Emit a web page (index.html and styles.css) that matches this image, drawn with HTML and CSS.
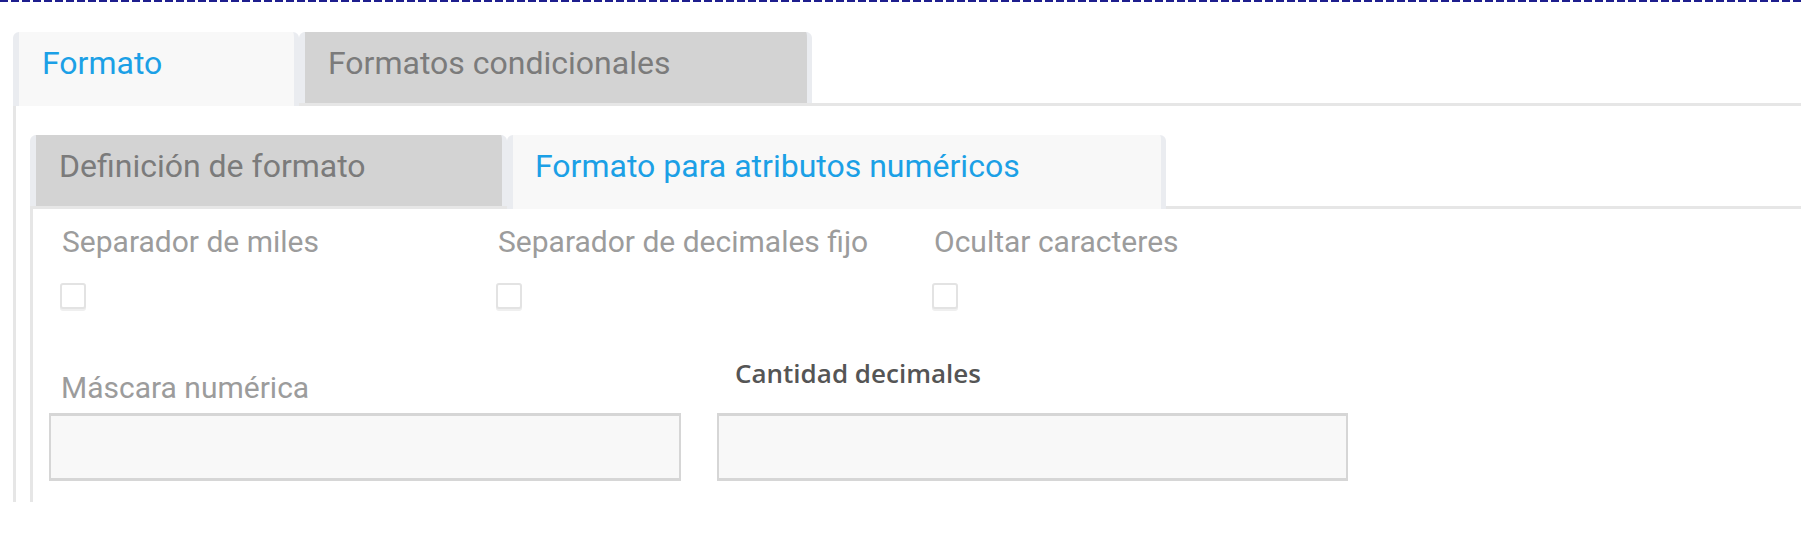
FILE: index.html
```html
<!DOCTYPE html>
<html lang="es">
<head>
<meta charset="utf-8">
<title>Formato</title>
<link rel="stylesheet" href="styles.css">
</head>
<body>
<div class="topline"></div>
<div class="outer">
  <div class="tabs tabs-outer">
    <div class="tab tab-active tab-o1">Formato</div>
    <div class="tab tab-o2">Formatos condicionales</div>
  </div>
  <div class="panel panel-outer">
    <div class="tabs tabs-inner">
      <div class="tab tab-i1">Definición de formato</div>
      <div class="tab tab-active tab-i2">Formato para atributos numéricos</div>
    </div>
    <div class="panel panel-inner">
      <div class="checks">
        <div class="check-field">
          <div class="label">Separador de miles</div>
          <div class="checkbox"></div>
        </div>
        <div class="check-field">
          <div class="label">Separador de decimales fijo</div>
          <div class="checkbox"></div>
        </div>
        <div class="check-field">
          <div class="label">Ocultar caracteres</div>
          <div class="checkbox"></div>
        </div>
      </div>
      <div class="inputs">
        <div class="input-field">
          <div class="label label-mask">Máscara numérica</div>
          <div class="input"></div>
        </div>
        <div class="input-field">
          <div class="label-strong">Cantidad decimales</div>
          <div class="input"></div>
        </div>
      </div>
    </div>
  </div>
</div>
</body>
</html>
```

FILE: styles.css
```css
html, body {
  margin: 0;
  padding: 0;
  background: #ffffff;
}

body {
  font-family: Roboto, "Noto Sans", sans-serif;
  width: 1801px;
  height: 551px;
  overflow: hidden;
}

.topline {
  height: 2px;
  background: repeating-linear-gradient(90deg, #1e1e8e 0 8px, #ffffff 8px 11px);
}

.outer {
  margin-top: 30px;
  padding-left: 13px;
}

.tabs {
  display: flex;
  height: 71px;
  border-bottom: 3px solid #e6e6e6;
}

.tab {
  box-sizing: border-box;
  height: 71px;
  border-left: 6px solid #eaecf0;
  border-right: 5px solid #eaecf0;
  border-radius: 6px 6px 0 0;
  background: #d3d3d3;
  color: #7b7b7b;
  font-size: 32px;
  line-height: 38px;
  padding-top: 12px;
  padding-left: 23px;
  white-space: nowrap;
}

.tab-active {
  background: #f8f8f8;
  color: #1ba0e6;
  height: 74px;
  margin-bottom: -3px;
}

.tab-o1 { width: 286px; }
.tab-o2 { width: 513px; }

.panel {
  border-left: 3px solid #e6e6e6;
}

.panel-outer {
  padding-top: 29px;
  padding-left: 14px;
}

.tab-i1 { width: 477px; }
.tab-i2 { width: 659px; padding-left: 22px; }

.panel-inner {
  padding: 15px 0 21px 27px;
}

.checks {
  display: grid;
  grid-template-columns: 436px 436px 436px;
}

.check-field {
  display: flex;
  flex-direction: column;
  align-items: flex-start;
}

.label {
  font-size: 30px;
  line-height: 36px;
  color: #9c9c9c;
  padding-left: 2px;
  white-space: nowrap;
}

.checkbox {
  box-sizing: border-box;
  width: 26px;
  height: 26px;
  margin-top: 23px;
  border: 2px solid #e3e3e3;
  border-radius: 3px;
  background: #ffffff;
  box-shadow: 0 2px 0 #efefef;
}

.inputs {
  display: grid;
  grid-template-columns: 632px 631px;
  column-gap: 36px;
  align-items: end;
  margin-top: 47px;
  margin-left: -11px;
}

.input-field {
  display: flex;
  flex-direction: column;
}

.label-mask {
  padding-left: 12px;
  margin-bottom: 7px;
}

.label-strong {
  font-family: "Open Sans", "Noto Sans", sans-serif;
  font-weight: 600;
  font-size: 26px;
  line-height: 34px;
  color: #555555;
  padding-left: 18px;
  margin-bottom: 23px;
  white-space: nowrap;
}

.input {
  box-sizing: border-box;
  height: 68px;
  background: #f8f8f8;
  border: 2px solid #d6d6d6;
  border-top-width: 3px;
  border-bottom-width: 3px;
}
```
